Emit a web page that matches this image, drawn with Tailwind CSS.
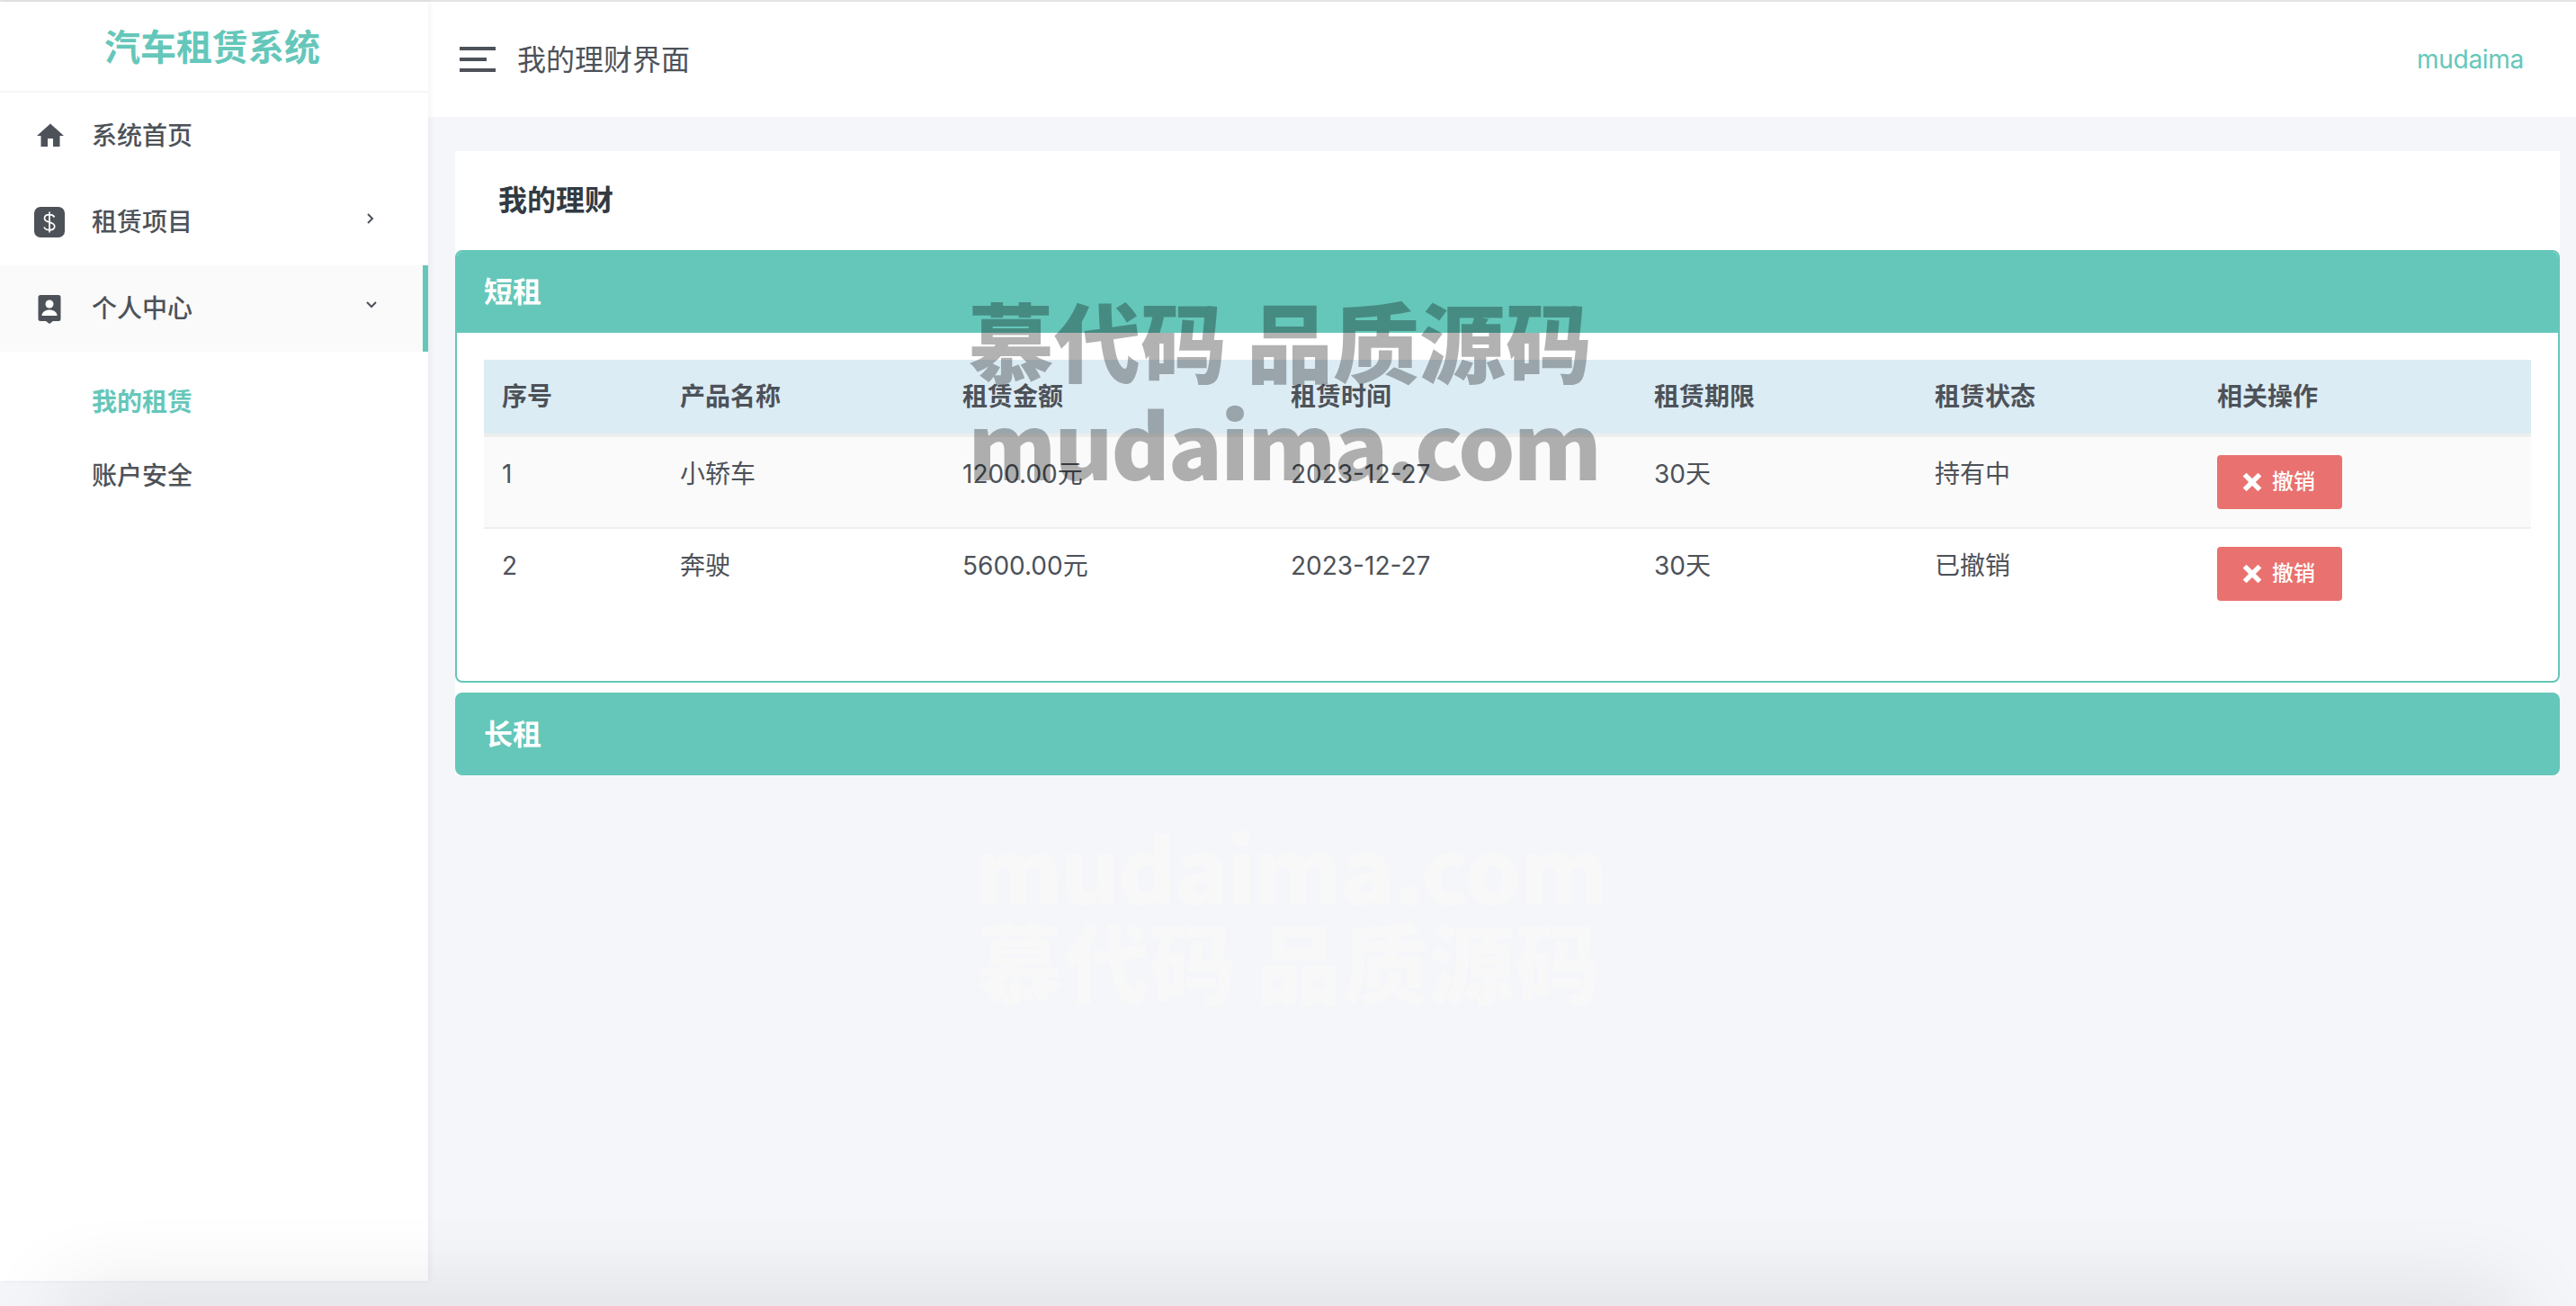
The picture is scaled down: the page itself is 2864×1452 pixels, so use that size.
<!DOCTYPE html>
<html lang="zh-CN">
<head>
<meta charset="utf-8">
<title>我的理财界面</title>
<script src="https://cdn.jsdelivr.net/npm/@tailwindcss/browser@4"></script>
</head>
<body class="m-0 bg-[#f4f6fa]">
<div class="relative w-[2864px] h-[1452px] overflow-hidden bg-[#f4f6fa] text-[#4d5259] font-['Inter','Noto_Sans_CJK_SC',sans-serif]">
  <div class="h-[2px] bg-[#e4e4e4]"></div>
  <div class="flex items-start">
    <aside class="relative z-10 w-[476px] h-[1422px] shrink-0 bg-white shadow-[2px_0_6px_rgba(0,0,0,0.05)]">
      <div class="h-[101px] border-b-2 border-[#f6f6f6] flex items-center justify-center pr-[4px] pt-[2px] text-[40px] font-semibold text-[#65c7ba]">汽车租赁系统</div>
      <nav class="text-[28px] font-medium">
        <div class="h-[96px] flex items-center pl-[38px]">
          <svg class="w-[36px] h-[36px] mr-[28px] fill-[#4d5259]" viewBox="0 0 24 24"><path d="M10 20v-6h4v6h5v-8h3L12 3 2 12h3v8z"/></svg>
          <span>系统首页</span>
        </div>
        <div class="h-[96px] flex items-center pl-[37px] pr-[58px]">
          <svg class="w-[36px] h-[36px] mr-[29px]" viewBox="0 0 36 36"><rect x="1" y="1" width="34" height="34" rx="7" fill="#4d5259"/><path d="M23.500 12.500c-1-2-3-2.800-5.500-2.800-3 0-5.500 1.500-5.500 4.100 0 2.800 2.700 3.600 5.500 4.300 3 .8 5.700 1.600 5.700 4.500 0 2.700-2.700 4.100-5.700 4.100-2.800 0-5-1-6-3.200M18 6.500v23" fill="none" stroke="#fff" stroke-width="1.700"/></svg>
          <span>租赁项目</span>
          <svg class="ml-auto w-[12px] h-[14px] mt-[-8px]" viewBox="0 0 12 14"><path d="M3 2l5 5-5 5" fill="none" stroke="#4d5259" stroke-width="2"/></svg>
        </div>
        <div class="relative h-[96px] flex items-center pl-[37px] pr-[50px] bg-[#fafafa] border-r-[6px] border-[#65c7ba]">
          <svg class="w-[36px] h-[36px] mr-[29px]" viewBox="0 0 36 36"><path d="M8 3h20a2.500 2.500 0 0 1 2.500 2.500v24a2.500 2.500 0 0 1-2.500 2.500h-6l-4 3-4-3H8a2.500 2.500 0 0 1-2.500-2.500v-24A2.500 2.500 0 0 1 8 3z" fill="#4d5259"/><circle cx="18" cy="13" r="4.500" fill="#fff"/><path d="M9.500 26c0-4 4-6.500 8.500-6.500s8.500 2.500 8.500 6.500z" fill="#fff"/></svg>
          <span>个人中心</span>
          <svg class="ml-auto w-[14px] h-[12px] mt-[-8px]" viewBox="0 0 14 12"><path d="M2 3l5 5 5-5" fill="none" stroke="#4d5259" stroke-width="2"/></svg>
        </div>
        <div class="pt-[15px] pl-[102px]">
          <div class="h-[82px] flex items-center text-[#65c7ba] font-semibold">我的租赁</div>
          <div class="h-[82px] flex items-center">账户安全</div>
        </div>
      </nav>
    </aside>
    <main class="flex-1 min-w-0">
      <header class="h-[128px] bg-white flex items-center pl-[35px] pr-[58px]">
        <div class="w-[40px] flex flex-col gap-[8px] mr-[24px]">
          <div class="h-[4px] bg-[#4d5259]"></div>
          <div class="h-[4px] w-[30px] bg-[#4d5259]"></div>
          <div class="h-[4px] bg-[#4d5259]"></div>
        </div>
        <div class="text-[32px] mt-[2px]">我的理财界面</div>
        <div class="ml-auto text-[28px] tracking-[-0.3px] text-[#65c7ba]">mudaima</div>
      </header>
      <section class="ml-[30px] mr-[18px] mt-[38px] bg-white">
        <h2 class="h-[110px] flex items-center pl-[48px] text-[32px] font-semibold text-[#333a42]">我的理财</h2>
        <div class="border-2 border-[#65c7ba] rounded-[8px] h-[481px] overflow-hidden">
          <div class="h-[90px] bg-[#65c7ba] flex items-center pl-[30px] text-[32px] font-semibold text-white">短租</div>
          <div class="pt-[30px] px-[30px]">
            <table class="w-full table-fixed border-collapse text-[28px]">
              <colgroup>
                <col class="w-[198px]"><col class="w-[314px]"><col class="w-[365px]"><col class="w-[404px]"><col class="w-[312px]"><col class="w-[314px]"><col>
              </colgroup>
              <thead class="bg-[#dcecf5]">
                <tr class="h-[84px] border-b-4 border-[#eeeeee] text-left font-semibold">
                  <th class="pl-[20px] font-semibold">序号</th><th class="pl-[20px] font-semibold">产品名称</th><th class="pl-[20px] font-semibold">租赁金额</th><th class="pl-[20px] font-semibold">租赁时间</th><th class="pl-[20px] font-semibold">租赁期限</th><th class="pl-[20px] font-semibold">租赁状态</th><th class="pl-[20px] font-semibold">相关操作</th>
                </tr>
              </thead>
              <tbody>
                <tr class="bg-[#fafafa] border-b-2 border-[#eeeeee]">
                  <td class="pl-[20px] py-[20px] align-top">1</td><td class="pl-[20px] py-[20px] align-top">小轿车</td><td class="pl-[20px] py-[20px] align-top">1200.00元</td><td class="pl-[20px] py-[20px] align-top">2023-12-27</td><td class="pl-[20px] py-[20px] align-top">30天</td><td class="pl-[20px] py-[20px] align-top">持有中</td>
                  <td class="pl-[20px] py-[20px] align-top">
                    <div class="w-[139px] h-[60px] rounded-[4px] bg-[#e9716f] text-white text-[24px] font-medium flex items-center pl-[28px] gap-[11px]">
                      <svg class="w-[22px] h-[22px]" viewBox="1.500 1.500 17 17"><path d="M5 2l5 5 5-5 3 3-5 5 5 5-3 3-5-5-5 5-3-3 5-5-5-5z" fill="#fff"/></svg><span>撤销</span>
                    </div>
                  </td>
                </tr>
                <tr>
                  <td class="pl-[20px] py-[20px] align-top">2</td><td class="pl-[20px] py-[20px] align-top">奔驶</td><td class="pl-[20px] py-[20px] align-top">5600.00元</td><td class="pl-[20px] py-[20px] align-top">2023-12-27</td><td class="pl-[20px] py-[20px] align-top">30天</td><td class="pl-[20px] py-[20px] align-top">已撤销</td>
                  <td class="pl-[20px] py-[20px] align-top">
                    <div class="w-[139px] h-[60px] rounded-[4px] bg-[#e9716f] text-white text-[24px] font-medium flex items-center pl-[28px] gap-[11px]">
                      <svg class="w-[22px] h-[22px]" viewBox="1.500 1.500 17 17"><path d="M5 2l5 5 5-5 3 3-5 5 5 5-3 3-5-5-5 5-3-3 5-5-5-5z" fill="#fff"/></svg><span>撤销</span>
                    </div>
                  </td>
                </tr>
              </tbody>
            </table>
          </div>
        </div>
        <div class="mt-[11px] h-[92px] rounded-[8px] bg-[#65c7ba] flex items-center pl-[32px] pt-[1px] text-[32px] font-semibold text-white">长租</div>
      </section>
    </main>
  </div>
  <!-- watermarks over the page -->
  <div class="absolute z-20 left-[1076px] top-[316px] whitespace-nowrap font-['Noto_Sans_CJK_SC',sans-serif] font-black text-black/30 leading-[122px]">
    <div class="text-[96px]">慕代码 品质源码</div>
    <div class="text-[100px] tracking-[-2.300px] mt-[-8px]">mudaima.com</div>
  </div>
  <div class="absolute z-20 left-[1083px] top-[902px] whitespace-nowrap font-['Noto_Sans_CJK_SC',sans-serif] font-black text-[#f8f8f9] leading-[122px]">
    <div class="text-[100px] tracking-[-2.300px]">mudaima.com</div>
    <div class="text-[96px] mt-[-18px] ml-[3px]">慕代码 品质源码</div>
  </div>
  <div class="absolute z-30 left-[70px] right-[70px] top-[1452px] h-[40px] shadow-[0_0_100px_rgba(0,0,0,0.2)]"></div>
</div>
</body>
</html>
